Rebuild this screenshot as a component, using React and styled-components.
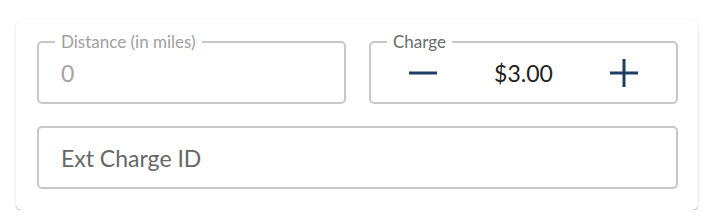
import React from "react";
import styled, { createGlobalStyle } from "styled-components";

const Global = createGlobalStyle`
  html, body { margin: 0; padding: 0; background: #ffffff; }
  body { font-family: Lato, "Open Sans", sans-serif; }
  * { box-sizing: border-box; }
`;

const Card = styled.div`
  margin: 20px 0 0 16px;
  width: 682px;
  background: #fff;
  border-radius: 6px;
  box-shadow: 0px 2px 1px -1px rgba(0,0,0,0.2), 0px 1px 1px 0px rgba(0,0,0,0.14), 0px 1px 3px 0px rgba(0,0,0,0.12);
  padding: 12px 20px 21px 21px;
  display: grid;
  grid-template-columns: 309px 309px;
  column-gap: 23px;
  row-gap: 13px;
`;

const Field = styled.fieldset`
  margin: 0;
  min-width: 0;
  border: 2px solid #c7c7c7;
  border-radius: 5px;
  padding: 0 22px 9px;
  grid-column: ${(p) => (p.$wide ? "1 / span 2" : "auto")};
`;

const Legend = styled.legend`
  font-family: Lato, sans-serif;
  font-size: 17px;
  line-height: 20px;
  height: 20px;
  padding: ${(p) => (p.$empty ? "0" : "0 6px")};
  margin-left: -6px;
  width: ${(p) => (p.$empty ? "0" : "auto")};
  color: ${(p) => (p.$muted ? "#a0a0a0" : "#6b6b6b")};
`;

const Input = styled.input`
  display: block;
  width: 100%;
  height: 41px;
  border: none;
  outline: none;
  padding: 0;
  background: transparent;
  font-family: Lato, sans-serif;
  font-size: 23px;
  color: #222;
  &:disabled { color: #a3a3a3; -webkit-text-fill-color: #a3a3a3; }
  &::placeholder { color: #676767; opacity: 1; }
`;

const Stepper = styled.div`
  display: flex;
  align-items: center;
  justify-content: space-between;
  height: 41px;
  padding: 0 16px;
`;

const StepButton = styled.button`
  border: none;
  background: transparent;
  padding: 0;
  margin: 0;
  width: 28px;
  height: 28px;
  display: flex;
  align-items: center;
  justify-content: center;
  color: #1b3e62;
  cursor: pointer;
`;

const Amount = styled.span`
  font-family: Lato, sans-serif;
  font-size: 23px;
  color: #222;
`;

const MinusIcon = () => (
  <svg width="28" height="28" viewBox="0 0 28 28">
    <line x1="0" y1="14" x2="28" y2="14" stroke="currentColor" strokeWidth="3" />
  </svg>
);

const PlusIcon = () => (
  <svg width="28" height="28" viewBox="0 0 28 28">
    <line x1="0" y1="14" x2="28" y2="14" stroke="currentColor" strokeWidth="3" />
    <line x1="14" y1="0" x2="14" y2="28" stroke="currentColor" strokeWidth="3" />
  </svg>
);

export default function App() {
  return (
    <>
      <Global />
      <Card>
        <Field>
          <Legend $muted>Distance (in miles)</Legend>
          <Input disabled value="0" readOnly />
        </Field>
        <Field>
          <Legend>Charge</Legend>
          <Stepper>
            <StepButton aria-label="decrease"><MinusIcon /></StepButton>
            <Amount>$3.00</Amount>
            <StepButton aria-label="increase"><PlusIcon /></StepButton>
          </Stepper>
        </Field>
        <Field $wide>
          <Legend $empty />
          <Input placeholder="Ext Charge ID" />
        </Field>
      </Card>
    </>
  );
}
